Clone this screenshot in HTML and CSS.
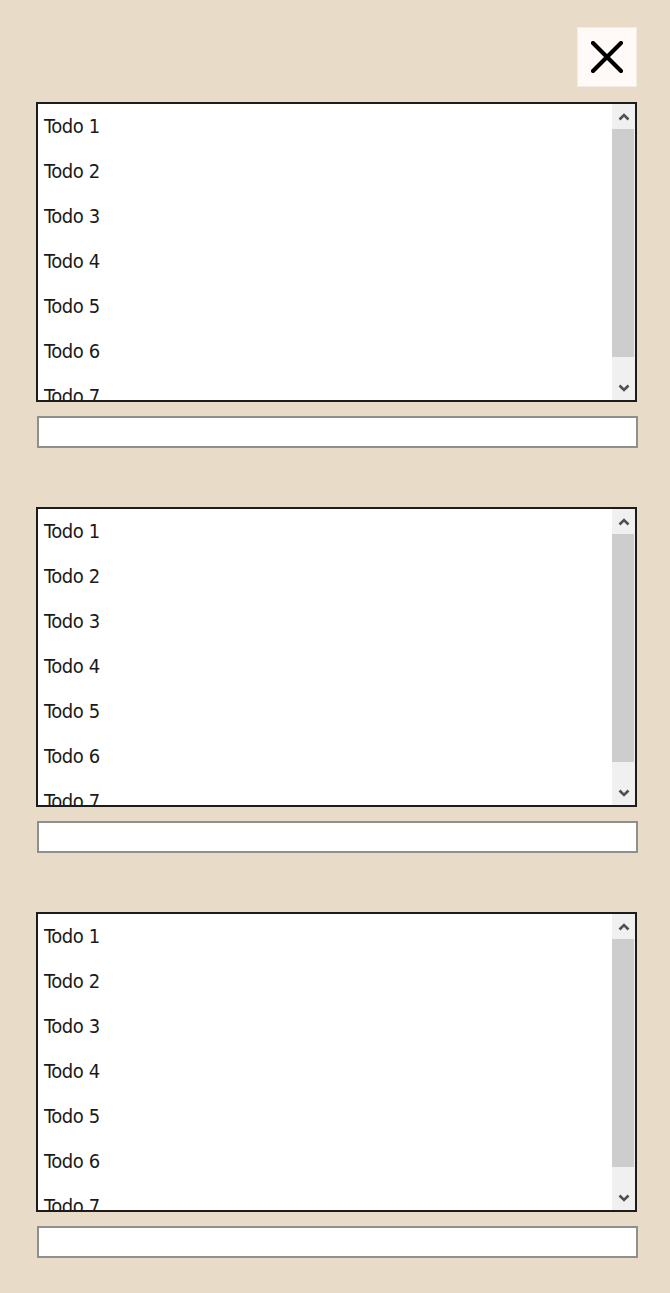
FILE: index.html
```html
<!DOCTYPE html>
<html>
<head>
<meta charset="utf-8">
<link rel="stylesheet" href="styles.css">
</head>
<body>
<div class="page">
  <div class="header">
    <button class="close" aria-label="Close">
      <svg width="32" height="32" viewBox="0 0 32 32"><path d="M2 2 L30 30 M30 2 L2 30" stroke="#000" stroke-width="4.2" stroke-linecap="round"/></svg>
    </button>
  </div>

  <div class="section">
    <div class="listbox">
      <div class="items">
        <div class="item">Todo 1</div>
        <div class="item">Todo 2</div>
        <div class="item">Todo 3</div>
        <div class="item">Todo 4</div>
        <div class="item">Todo 5</div>
        <div class="item">Todo 6</div>
        <div class="item">Todo 7</div>
      </div>
      <div class="scrollbar">
        <div class="sb-btn"><svg width="12" height="8" viewBox="0 0 12 8"><path d="M1.5 6.5 L6 2 L10.5 6.5" fill="none" stroke="#505050" stroke-width="2.6"/></svg></div>
        <div class="sb-thumb"></div>
        <div class="sb-track"></div>
        <div class="sb-btn"><svg width="12" height="8" viewBox="0 0 12 8"><path d="M1.5 1.5 L6 6 L10.5 1.5" fill="none" stroke="#505050" stroke-width="2.6"/></svg></div>
      </div>
    </div>
    <input class="entry" type="text">
  </div>

  <div class="section">
    <div class="listbox">
      <div class="items">
        <div class="item">Todo 1</div>
        <div class="item">Todo 2</div>
        <div class="item">Todo 3</div>
        <div class="item">Todo 4</div>
        <div class="item">Todo 5</div>
        <div class="item">Todo 6</div>
        <div class="item">Todo 7</div>
      </div>
      <div class="scrollbar">
        <div class="sb-btn"><svg width="12" height="8" viewBox="0 0 12 8"><path d="M1.5 6.5 L6 2 L10.5 6.5" fill="none" stroke="#505050" stroke-width="2.6"/></svg></div>
        <div class="sb-thumb"></div>
        <div class="sb-track"></div>
        <div class="sb-btn"><svg width="12" height="8" viewBox="0 0 12 8"><path d="M1.5 1.5 L6 6 L10.5 1.5" fill="none" stroke="#505050" stroke-width="2.6"/></svg></div>
      </div>
    </div>
    <input class="entry" type="text">
  </div>

  <div class="section">
    <div class="listbox">
      <div class="items">
        <div class="item">Todo 1</div>
        <div class="item">Todo 2</div>
        <div class="item">Todo 3</div>
        <div class="item">Todo 4</div>
        <div class="item">Todo 5</div>
        <div class="item">Todo 6</div>
        <div class="item">Todo 7</div>
      </div>
      <div class="scrollbar">
        <div class="sb-btn"><svg width="12" height="8" viewBox="0 0 12 8"><path d="M1.5 6.5 L6 2 L10.5 6.5" fill="none" stroke="#505050" stroke-width="2.6"/></svg></div>
        <div class="sb-thumb"></div>
        <div class="sb-track"></div>
        <div class="sb-btn"><svg width="12" height="8" viewBox="0 0 12 8"><path d="M1.5 1.5 L6 6 L10.5 1.5" fill="none" stroke="#505050" stroke-width="2.6"/></svg></div>
      </div>
    </div>
    <input class="entry" type="text">
  </div>
</div>
</body>
</html>
```

FILE: styles.css
```css
html, body {
  margin: 0;
  padding: 0;
  background: #e8dcc9;
}

.page {
  padding: 27px 0 0 36px;
  width: 602px;
  display: flex;
  flex-direction: column;
}

.header {
  display: flex;
  justify-content: flex-end;
  width: 601px;
  margin-bottom: 15px;
}

.close {
  width: 60px;
  height: 60px;
  padding: 0;
  margin: 0;
  border: 1px solid #f3ebe6;
  background: #fffaf8;
  display: flex;
  align-items: center;
  justify-content: center;
}

.section {
  display: flex;
  flex-direction: column;
  margin-bottom: 59px;
}

.listbox {
  box-sizing: border-box;
  width: 601px;
  height: 300px;
  border: 2px solid #1c1c1c;
  background: #ffffff;
  display: flex;
  flex-direction: row;
}

.items {
  flex: 1;
  overflow: hidden;
  display: flex;
  flex-direction: column;
}

.item {
  flex: 0 0 45px;
  height: 45px;
  line-height: 45px;
  padding-left: 6px;
  font-family: "DejaVu Sans Condensed", "DejaVu Sans", sans-serif;
  font-stretch: condensed;
  font-size: 20px;
  letter-spacing: -0.4px;
  color: #1a1a1a;
}

.scrollbar {
  width: 23px;
  display: flex;
  flex-direction: column;
  background: #f0f0f0;
}

.sb-btn {
  height: 25px;
  display: flex;
  align-items: center;
  justify-content: center;
  flex: 0 0 25px;
}

.sb-thumb {
  height: 228px;
  flex: 0 0 228px;
  background: #cdcdcd;
  margin-right: 1px;
}

.sb-track {
  flex: 1;
}

.entry {
  box-sizing: border-box;
  width: 601px;
  height: 32px;
  margin: 14px 0 0 1px;
  padding: 0 4px;
  border: 2px solid #8f8f8f;
  background: #ffffff;
  outline: none;
  font-family: "Liberation Sans", sans-serif;
  font-size: 16px;
}
```
